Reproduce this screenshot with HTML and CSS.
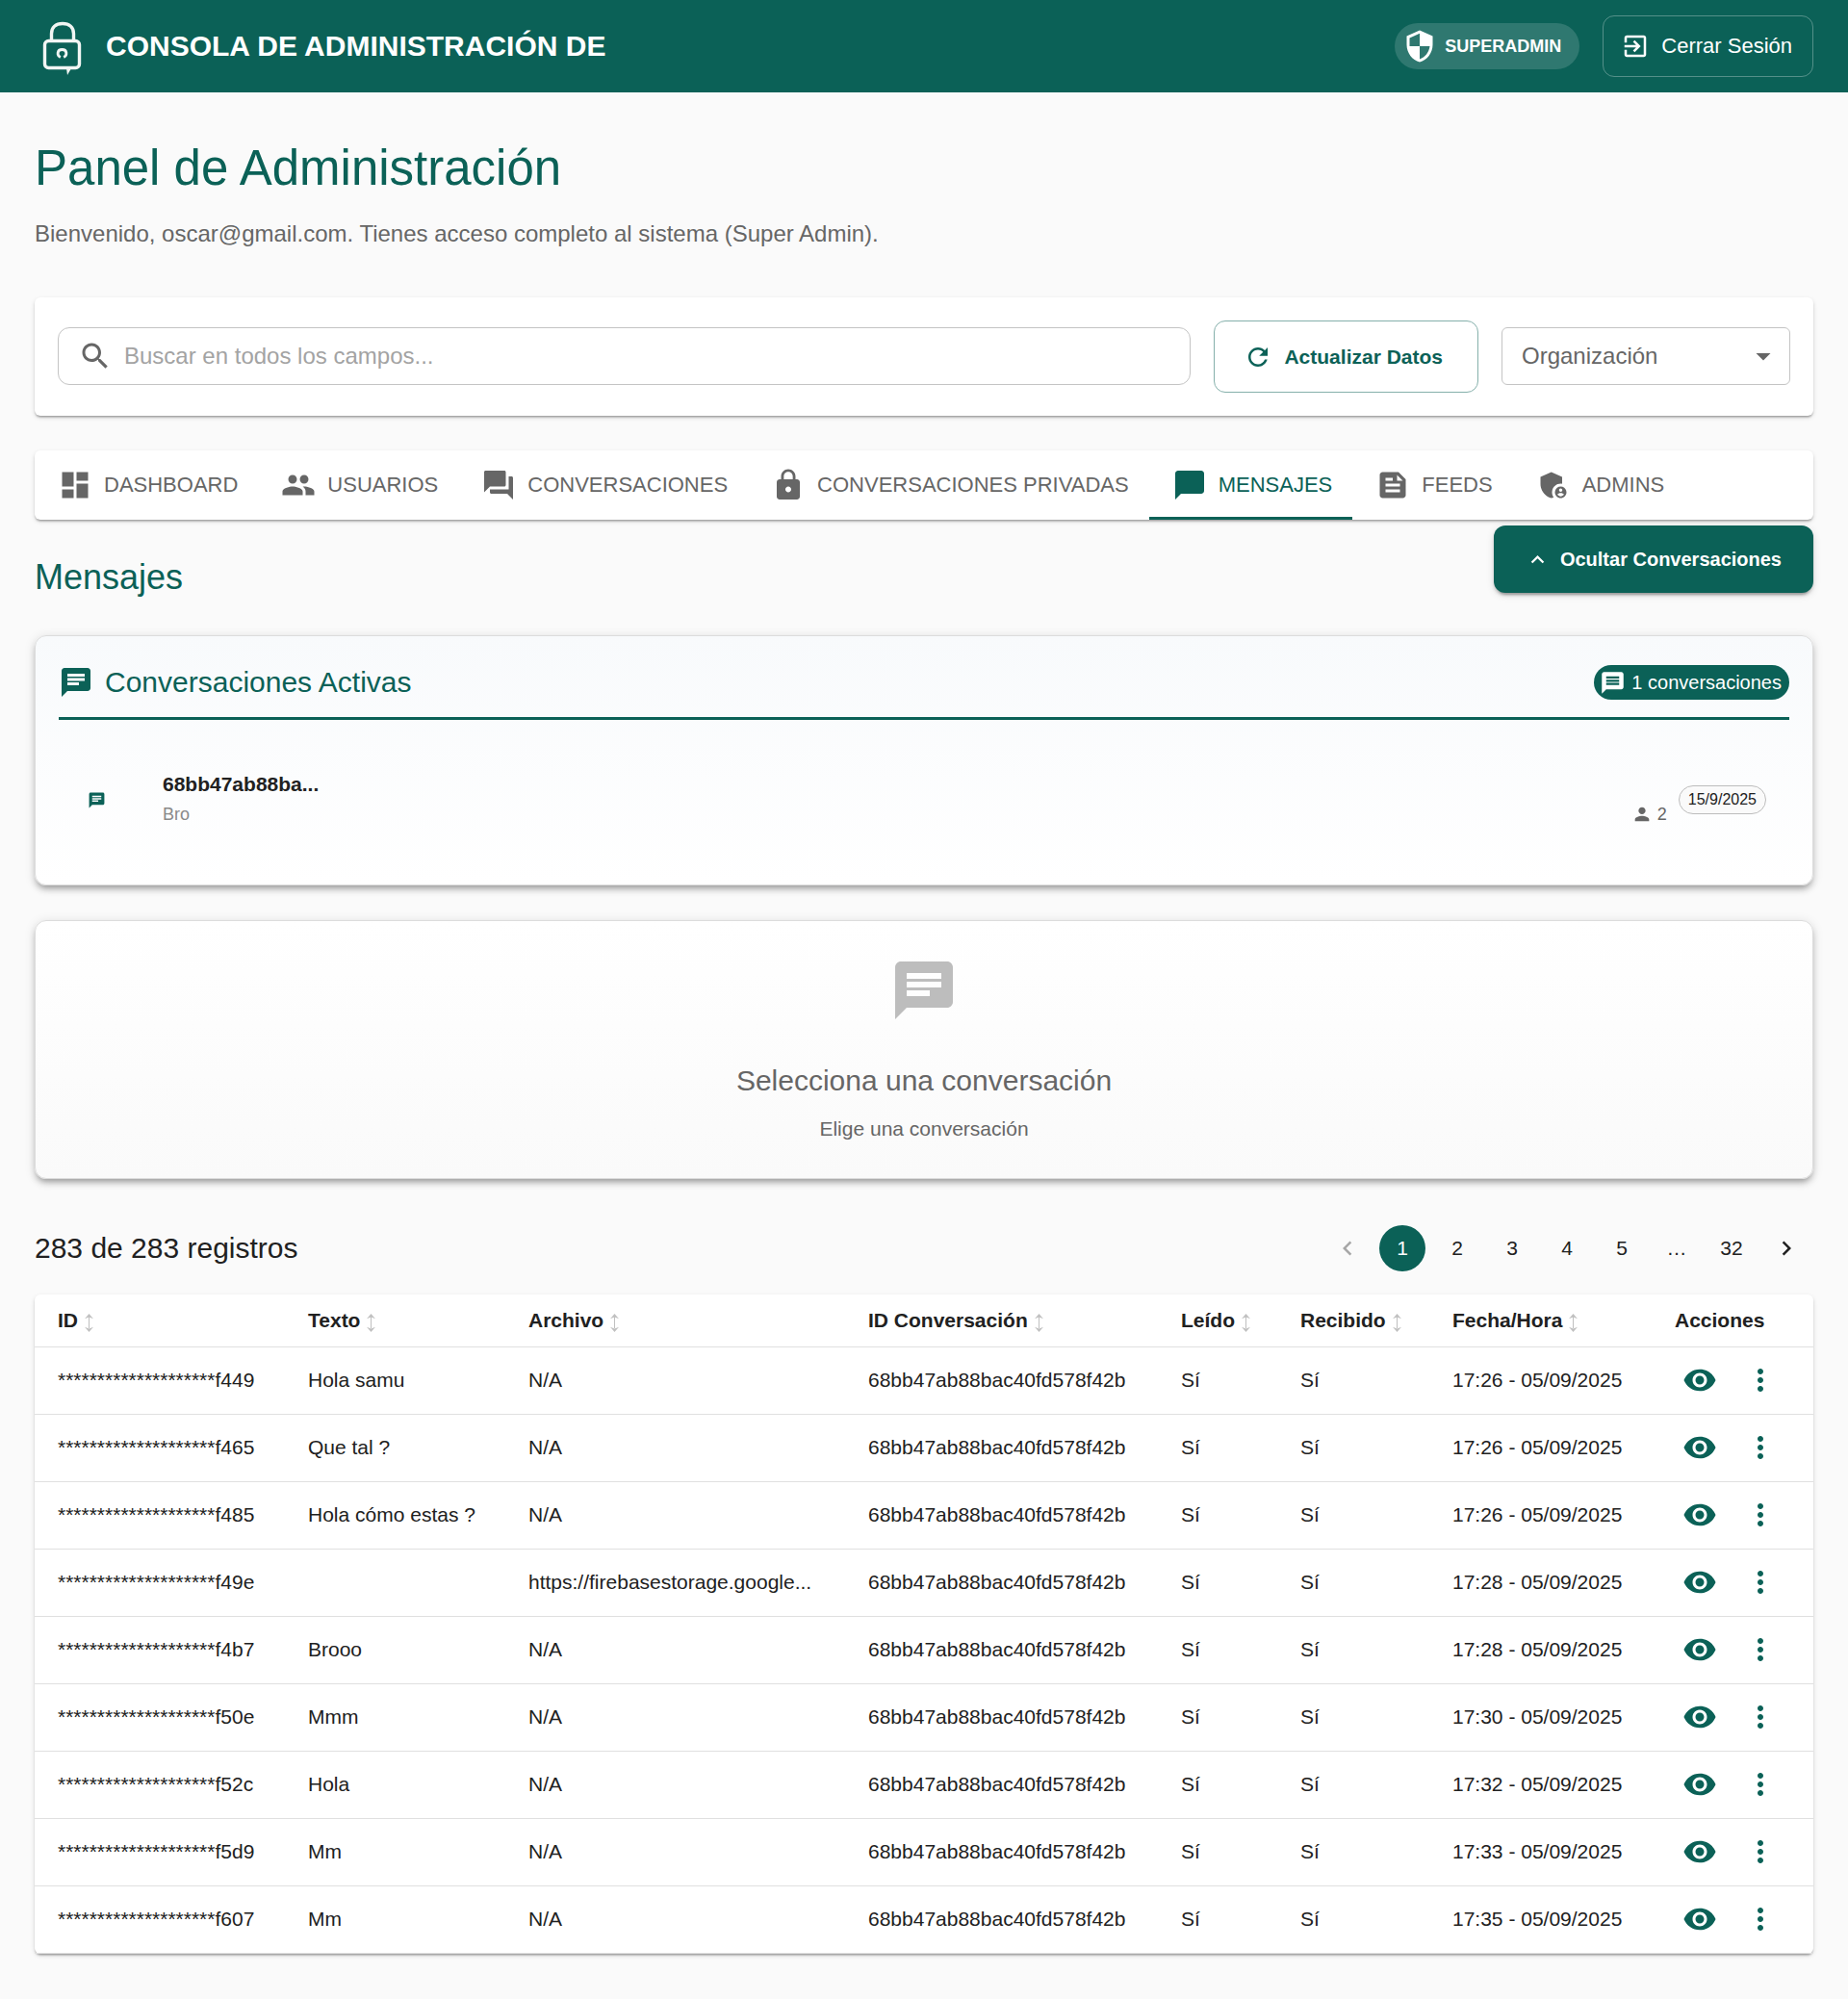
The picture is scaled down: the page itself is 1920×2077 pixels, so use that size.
FILE: index.html
```html
<!DOCTYPE html>
<html lang="es">
<head>
<meta charset="utf-8">
<meta name="viewport" content="width=device-width, initial-scale=1">
<title>Consola de Administración</title>
<link rel="stylesheet" href="styles.css">
</head>
<body>
<svg class="sprite" aria-hidden="true">
  <symbol id="i-security" viewBox="0 0 24 24"><path d="M12 1 3 5v6c0 5.55 3.84 10.74 9 12 5.16-1.26 9-6.45 9-12V5l-9-4zm0 10.99h7c-.53 4.12-3.28 7.79-7 8.94V12H5V6.3l7-3.11v8.8z"/></symbol>
  <symbol id="i-exit" viewBox="0 0 24 24"><path d="M10.09 15.59 11.5 17l5-5-5-5-1.41 1.41L12.67 11H3v2h9.67l-2.58 2.59zM19 3H5c-1.11 0-2 .9-2 2v4h2V5h14v14H5v-4H3v4c0 1.1.89 2 2 2h14c1.1 0 2-.9 2-2V5c0-1.1-.9-2-2-2z"/></symbol>
  <symbol id="i-search" viewBox="0 0 24 24"><path d="M15.5 14h-.79l-.28-.27C15.41 12.59 16 11.11 16 9.5 16 5.91 13.09 3 9.5 3S3 5.91 3 9.5 5.91 16 9.5 16c1.61 0 3.09-.59 4.23-1.57l.27.28v.79l5 4.99L20.49 19l-4.99-5zm-6 0C7.01 14 5 11.99 5 9.5S7.01 5 9.5 5 14 7.01 14 9.5 11.99 14 9.5 14z"/></symbol>
  <symbol id="i-refresh" viewBox="0 0 24 24"><path d="M17.65 6.35C16.2 4.9 14.21 4 12 4c-4.42 0-7.99 3.58-7.99 8s3.57 8 7.99 8c3.73 0 6.84-2.55 7.73-6h-2.08c-.82 2.33-3.04 4-5.65 4-3.31 0-6-2.69-6-6s2.69-6 6-6c1.66 0 3.14.69 4.22 1.78L13 11h7V4l-2.35 2.35z"/></symbol>
  <symbol id="i-drop" viewBox="0 0 24 24"><path d="m7 10 5 5 5-5z"/></symbol>
  <symbol id="i-dashboard" viewBox="0 0 24 24"><path d="M3 13h8V3H3v10zm0 8h8v-6H3v6zm10 0h8V11h-8v10zm0-18v6h8V3h-8z"/></symbol>
  <symbol id="i-people" viewBox="0 0 24 24"><path d="M16 11c1.66 0 2.99-1.34 2.99-3S17.66 5 16 5c-1.66 0-3 1.34-3 3s1.34 3 3 3zm-8 0c1.66 0 2.99-1.34 2.99-3S9.66 5 8 5C6.34 5 5 6.34 5 8s1.34 3 3 3zm0 2c-2.33 0-7 1.17-7 3.5V19h14v-2.5c0-2.33-4.67-3.5-7-3.5zm8 0c-.29 0-.62.02-.97.05 1.16.84 1.97 1.97 1.97 3.45V19h6v-2.5c0-2.33-4.67-3.5-7-3.5z"/></symbol>
  <symbol id="i-forum" viewBox="0 0 24 24"><path d="M21 6h-2v9H6v2c0 .55.45 1 1 1h11l4 4V7c0-.55-.45-1-1-1zm-4 6V3c0-.55-.45-1-1-1H3c-.55 0-1 .45-1 1v14l4-4h10c.55 0 1-.45 1-1z"/></symbol>
  <symbol id="i-lock" viewBox="0 0 24 24"><path d="M18 8h-1V6c0-2.76-2.24-5-5-5S7 3.24 7 6v2H6c-1.1 0-2 .9-2 2v10c0 1.1.9 2 2 2h12c1.1 0 2-.9 2-2V10c0-1.1-.9-2-2-2zm-6 9c-1.1 0-2-.9-2-2s.9-2 2-2 2 .9 2 2-.9 2-2 2zm3.1-9H8.9V6c0-1.71 1.39-3.1 3.1-3.1 1.71 0 3.1 1.39 3.1 3.1v2z"/></symbol>
  <symbol id="i-bubble" viewBox="0 0 24 24"><path d="M20 2H4c-1.1 0-2 .9-2 2v18l4-4h14c1.1 0 2-.9 2-2V4c0-1.1-.9-2-2-2z"/></symbol>
  <symbol id="i-feed" viewBox="0 0 24 24"><path d="M16 3H5c-1.1 0-2 .9-2 2v14c0 1.1.9 2 2 2h14c1.1 0 2-.9 2-2V8l-5-5zM7 7h5v2H7V7zm10 10H7v-2h10v2zm0-4H7v-2h10v2zm-2-4V5l4 4h-4z"/></symbol>
  <symbol id="i-admin" viewBox="0 0 24 24"><path d="M17 11c.34 0 .67.04 1 .09V6.27L10.5 3 3 6.27v4.91c0 4.54 3.2 8.79 7.5 9.82.55-.13 1.08-.32 1.6-.55-.69-.98-1.1-2.17-1.1-3.45 0-3.31 2.69-6 6-6z"/><path d="M17 13c-2.21 0-4 1.79-4 4s1.79 4 4 4 4-1.79 4-4-1.79-4-4-4zm0 1.38c.62 0 1.12.51 1.12 1.12s-.51 1.12-1.12 1.12-1.12-.51-1.12-1.12.5-1.12 1.12-1.12zm0 5.37c-.93 0-1.74-.46-2.24-1.17.05-.72 1.51-1.08 2.24-1.08s2.19.36 2.24 1.08c-.5.71-1.31 1.17-2.24 1.17z"/></symbol>
  <symbol id="i-up" viewBox="0 0 24 24"><path d="m12 8-6 6 1.41 1.41L12 10.83l4.59 4.58L18 14z"/></symbol>
  <symbol id="i-chat" viewBox="0 0 24 24"><path d="M20 2H4c-1.1 0-1.99.9-1.99 2L2 22l4-4h14c1.1 0 2-.9 2-2V4c0-1.1-.9-2-2-2zM6 9h12v2H6V9zm8 5H6v-2h8v2zm4-6H6V6h12v2z"/></symbol>
  <symbol id="i-message" viewBox="0 0 24 24"><path d="M20 2H4c-1.1 0-1.99.9-1.99 2L2 22l4-4h14c1.1 0 2-.9 2-2V4c0-1.1-.9-2-2-2zm-2 12H6v-2h12v2zm0-3H6V9h12v2zm0-3H6V6h12v2z"/></symbol>
  <symbol id="i-person" viewBox="0 0 24 24"><path d="M12 12c2.21 0 4-1.79 4-4s-1.79-4-4-4-4 1.79-4 4 1.79 4 4 4zm0 2c-2.67 0-8 1.34-8 4v2h16v-2c0-2.66-5.33-4-8-4z"/></symbol>
  <symbol id="i-prev" viewBox="0 0 24 24"><path d="M15.41 7.41 14 6l-6 6 6 6 1.41-1.41L10.83 12z"/></symbol>
  <symbol id="i-next" viewBox="0 0 24 24"><path d="M10 6 8.59 7.41 13.17 12l-4.58 4.59L10 18l6-6z"/></symbol>
  <symbol id="i-eye" viewBox="0 0 24 24"><path d="M12 4.5C7 4.5 2.73 7.61 1 12c1.73 4.39 6 7.5 11 7.5s9.27-3.11 11-7.5c-1.73-4.39-6-7.5-11-7.5zM12 17c-2.76 0-5-2.24-5-5s2.24-5 5-5 5 2.24 5 5-2.24 5-5 5zm0-8c-1.66 0-3 1.34-3 3s1.34 3 3 3 3-1.34 3-3-1.34-3-3-3z"/></symbol>
  <symbol id="i-more" viewBox="0 0 24 24"><path d="M12 8c1.1 0 2-.9 2-2s-.9-2-2-2-2 .9-2 2 .9 2 2 2zm0 2c-1.1 0-2 .9-2 2s.9 2 2 2 2-.9 2-2-.9-2-2-2zm0 6c-1.1 0-2 .9-2 2s.9 2 2 2 2-.9 2-2-.9-2-2-2z"/></symbol>
  <symbol id="i-sort" viewBox="0 0 9 19"><path d="M4 3h1v13H4zM4.500 0 9 5.200 4.500 3.600 0 5.200zM4.500 19 9 13.800 4.500 15.400 0 13.800z"/></symbol>
</svg>

<header class="topbar">
  <svg class="logo" viewBox="0 0 56 60" aria-hidden="true">
    <g fill="none" stroke="#f1f6f4">
      <path stroke-width="3.400" d="M17.500 24v-7C17.500 10.500 22 6.500 29 6.500S40.500 10.500 40.500 17v7"/>
      <rect stroke-width="3.400" x="10.500" y="24.500" width="36" height="28" rx="4"/>
      <path stroke-width="2.800" d="M26.800 41.500c-4-2-3.600-8 1.700-8s5.700 6 1.700 8"/>
    </g>
    <path fill="#f1f6f4" d="M33 53h5l-4 7z"/>
  </svg>
  <h1 class="brand">CONSOLA DE ADMINISTRACIÓN DE</h1>
  <span class="role"><svg class="icon"><use href="#i-security"/></svg>SUPERADMIN</span>
  <button type="button" class="logout"><svg class="icon icon-30"><use href="#i-exit"/></svg>Cerrar Sesión</button>
</header>

<main class="page">
  <h2 class="title">Panel de Administración</h2>
  <p class="welcome">Bienvenido, oscar@gmail.com. Tienes acceso completo al sistema (Super Admin).</p>

  <form class="paper filters">
    <label class="search">
      <svg class="icon" aria-hidden="true"><use href="#i-search"/></svg>
      <input type="text" placeholder="Buscar en todos los campos..." aria-label="Buscar en todos los campos">
    </label>
    <button type="button" class="refresh"><svg class="icon icon-30"><use href="#i-refresh"/></svg>Actualizar Datos</button>
    <div class="select">
      <select aria-label="Organización"><option>Organización</option></select>
      <svg class="icon" aria-hidden="true"><use href="#i-drop"/></svg>
    </div>
  </form>

  <nav class="paper tabs">
    <a class="tab" href="#"><svg class="icon"><use href="#i-dashboard"/></svg>DASHBOARD</a>
    <a class="tab" href="#"><svg class="icon"><use href="#i-people"/></svg>USUARIOS</a>
    <a class="tab" href="#"><svg class="icon"><use href="#i-forum"/></svg>CONVERSACIONES</a>
    <a class="tab" href="#"><svg class="icon"><use href="#i-lock"/></svg>CONVERSACIONES PRIVADAS</a>
    <a class="tab is-active" href="#" aria-current="page"><svg class="icon"><use href="#i-bubble"/></svg>MENSAJES</a>
    <a class="tab" href="#"><svg class="icon"><use href="#i-feed"/></svg>FEEDS</a>
    <a class="tab" href="#"><svg class="icon"><use href="#i-admin"/></svg>ADMINS</a>
  </nav>

  <div class="section-head">
    <h3 class="section-title">Mensajes</h3>
    <button type="button" class="toggle"><svg class="icon icon-27"><use href="#i-up"/></svg>Ocultar Conversaciones</button>
  </div>

  <section class="panel active-chats">
    <div class="panel-head">
      <svg class="icon"><use href="#i-chat"/></svg>
      <h4 class="heading">Conversaciones Activas</h4>
      <span class="count"><svg class="icon icon-27"><use href="#i-message"/></svg>1 conversaciones</span>
    </div>
    <div class="chat">
      <span class="chat-icon"><svg class="icon icon-19"><use href="#i-chat"/></svg></span>
      <div class="chat-text">
        <strong class="chat-name">68bb47ab88ba...</strong>
        <span class="chat-last">Bro</span>
      </div>
      <span class="members"><svg class="icon icon-22"><use href="#i-person"/></svg>2</span>
      <span class="date">15/9/2025</span>
    </div>
  </section>

  <section class="panel empty">
    <svg class="icon icon-72"><use href="#i-chat"/></svg>
    <h4 class="heading">Selecciona una conversación</h4>
    <p class="empty-hint">Elige una conversación</p>
  </section>

  <div class="list-head">
    <p class="heading">283 de 283 registros</p>
    <nav class="pager" aria-label="Paginación">
      <button type="button" disabled aria-label="Anterior"><svg class="icon icon-30"><use href="#i-prev"/></svg></button>
      <button type="button" class="is-current">1</button>
      <button type="button">2</button>
      <button type="button">3</button>
      <button type="button">4</button>
      <button type="button">5</button>
      <span>…</span>
      <button type="button">32</button>
      <button type="button" aria-label="Siguiente"><svg class="icon icon-30"><use href="#i-next"/></svg></button>
    </nav>
  </div>

  <div class="paper">
    <table class="grid">
      <colgroup><col class="c-id"><col class="c-text"><col class="c-file"><col class="c-conv"><col class="c-read"><col class="c-recv"><col class="c-date"><col class="c-act"></colgroup>
      <thead>
        <tr>
          <th><button type="button">ID<svg class="sort"><use href="#i-sort"/></svg></button></th>
          <th><button type="button">Texto<svg class="sort"><use href="#i-sort"/></svg></button></th>
          <th><button type="button">Archivo<svg class="sort"><use href="#i-sort"/></svg></button></th>
          <th><button type="button">ID Conversación<svg class="sort"><use href="#i-sort"/></svg></button></th>
          <th><button type="button">Leído<svg class="sort"><use href="#i-sort"/></svg></button></th>
          <th><button type="button">Recibido<svg class="sort"><use href="#i-sort"/></svg></button></th>
          <th><button type="button">Fecha/Hora<svg class="sort"><use href="#i-sort"/></svg></button></th>
          <th>Acciones</th>
        </tr>
      </thead>
      <tbody>
        <tr><td>********************f449</td><td>Hola samu</td><td>N/A</td><td>68bb47ab88bac40fd578f42b</td><td>Sí</td><td>Sí</td><td>17:26 - 05/09/2025</td><td><div class="actions"><button type="button" aria-label="Ver"><svg class="icon"><use href="#i-eye"/></svg></button><button type="button" aria-label="Más"><svg class="icon"><use href="#i-more"/></svg></button></div></td></tr>
        <tr><td>********************f465</td><td>Que tal ?</td><td>N/A</td><td>68bb47ab88bac40fd578f42b</td><td>Sí</td><td>Sí</td><td>17:26 - 05/09/2025</td><td><div class="actions"><button type="button" aria-label="Ver"><svg class="icon"><use href="#i-eye"/></svg></button><button type="button" aria-label="Más"><svg class="icon"><use href="#i-more"/></svg></button></div></td></tr>
        <tr><td>********************f485</td><td>Hola cómo estas ?</td><td>N/A</td><td>68bb47ab88bac40fd578f42b</td><td>Sí</td><td>Sí</td><td>17:26 - 05/09/2025</td><td><div class="actions"><button type="button" aria-label="Ver"><svg class="icon"><use href="#i-eye"/></svg></button><button type="button" aria-label="Más"><svg class="icon"><use href="#i-more"/></svg></button></div></td></tr>
        <tr><td>********************f49e</td><td></td><td>https://firebasestorage.google...</td><td>68bb47ab88bac40fd578f42b</td><td>Sí</td><td>Sí</td><td>17:28 - 05/09/2025</td><td><div class="actions"><button type="button" aria-label="Ver"><svg class="icon"><use href="#i-eye"/></svg></button><button type="button" aria-label="Más"><svg class="icon"><use href="#i-more"/></svg></button></div></td></tr>
        <tr><td>********************f4b7</td><td>Brooo</td><td>N/A</td><td>68bb47ab88bac40fd578f42b</td><td>Sí</td><td>Sí</td><td>17:28 - 05/09/2025</td><td><div class="actions"><button type="button" aria-label="Ver"><svg class="icon"><use href="#i-eye"/></svg></button><button type="button" aria-label="Más"><svg class="icon"><use href="#i-more"/></svg></button></div></td></tr>
        <tr><td>********************f50e</td><td>Mmm</td><td>N/A</td><td>68bb47ab88bac40fd578f42b</td><td>Sí</td><td>Sí</td><td>17:30 - 05/09/2025</td><td><div class="actions"><button type="button" aria-label="Ver"><svg class="icon"><use href="#i-eye"/></svg></button><button type="button" aria-label="Más"><svg class="icon"><use href="#i-more"/></svg></button></div></td></tr>
        <tr><td>********************f52c</td><td>Hola</td><td>N/A</td><td>68bb47ab88bac40fd578f42b</td><td>Sí</td><td>Sí</td><td>17:32 - 05/09/2025</td><td><div class="actions"><button type="button" aria-label="Ver"><svg class="icon"><use href="#i-eye"/></svg></button><button type="button" aria-label="Más"><svg class="icon"><use href="#i-more"/></svg></button></div></td></tr>
        <tr><td>********************f5d9</td><td>Mm</td><td>N/A</td><td>68bb47ab88bac40fd578f42b</td><td>Sí</td><td>Sí</td><td>17:33 - 05/09/2025</td><td><div class="actions"><button type="button" aria-label="Ver"><svg class="icon"><use href="#i-eye"/></svg></button><button type="button" aria-label="Más"><svg class="icon"><use href="#i-more"/></svg></button></div></td></tr>
        <tr><td>********************f607</td><td>Mm</td><td>N/A</td><td>68bb47ab88bac40fd578f42b</td><td>Sí</td><td>Sí</td><td>17:35 - 05/09/2025</td><td><div class="actions"><button type="button" aria-label="Ver"><svg class="icon"><use href="#i-eye"/></svg></button><button type="button" aria-label="Más"><svg class="icon"><use href="#i-more"/></svg></button></div></td></tr>
      </tbody>
    </table>
  </div>
</main>
</body>
</html>
```
FILE: styles.css
```css
:root {
  --primary: #0b6157;
  --text: #212121;
  --muted: #666;
  --line: #e0e0e0;
}

*, *::before, *::after { box-sizing: border-box; }

body {
  margin: 0;
  background: #fafafa;
  color: var(--text);
  font-family: "Liberation Sans", Arial, Helvetica, sans-serif;
  font-size: 21px;
  line-height: 30px;
}

h1, h2, h3, h4, p { margin: 0; font-weight: 400; }

button, input, select { font: inherit; color: inherit; }
button { padding: 0; border: 0; background: none; cursor: pointer; white-space: nowrap; }

.sprite { display: none; }
.icon { width: 36px; height: 36px; flex: none; display: block; fill: currentColor; }
.icon-19 { width: 19px; height: 19px; }
.icon-22 { width: 22px; height: 22px; }
.icon-27 { width: 27px; height: 27px; }
.icon-30 { width: 30px; height: 30px; }
.icon-72 { width: 72px; height: 72px; }

/* Top bar */
.topbar {
  display: flex;
  align-items: center;
  gap: 24px;
  height: 96px;
  padding: 0 36px;
  background: var(--primary);
  color: #fff;
}
.logo { width: 56px; height: 60px; flex: none; }
.brand {
  flex: 1;
  margin-left: -6px;
  font-size: 30px;
  line-height: 46px;
  font-weight: 700;
}
.role {
  display: flex;
  align-items: center;
  gap: 8px;
  height: 48px;
  padding: 0 19px 0 8px;
  border-radius: 24px;
  background: rgba(255, 255, 255, .15);
  font-size: 18px;
  font-weight: 700;
}
.logout {
  display: flex;
  align-items: center;
  gap: 12px;
  height: 64px;
  padding: 0 21px 0 18px;
  border: 1px solid rgba(255, 255, 255, .3);
  border-radius: 12px;
  font-size: 22px;
}

/* Page */
.page { padding: 48px 36px 36px; }
.title { font-size: 51px; line-height: 62px; color: var(--primary); }
.welcome { margin-top: 19px; font-size: 24px; line-height: 36px; color: var(--muted); }

.paper {
  border-radius: 6px;
  background: #fff;
  box-shadow: 0 3px 2px -2px rgba(0, 0, 0, .2), 0 2px 2px rgba(0, 0, 0, .14), 0 2px 5px rgba(0, 0, 0, .12);
}

.filters { display: flex; align-items: center; gap: 24px; margin-top: 48px; padding: 24px; }
.search {
  flex: 1;
  display: flex;
  align-items: center;
  gap: 12px;
  height: 60px;
  padding: 0 20px;
  border: 1px solid #c4c4c4;
  border-radius: 12px;
  color: var(--muted);
}
.search input {
  flex: 1;
  min-width: 0;
  height: 100%;
  padding: 0;
  border: 0;
  outline: 0;
  background: none;
  font-size: 24px;
}
.search input::placeholder { color: #a3a3a3; opacity: 1; }
.refresh {
  display: flex;
  align-items: center;
  gap: 12px;
  height: 75px;
  padding: 0 36px 0 30px;
  border: 1px solid #85b0ab;
  border-radius: 12px;
  color: var(--primary);
  font-weight: 700;
}
.select { position: relative; width: 300px; color: var(--muted); }
.select select {
  display: block;
  width: 100%;
  height: 60px;
  padding: 0 48px 0 20px;
  border: 1px solid #c4c4c4;
  border-radius: 6px;
  background: #fff;
  font-size: 24px;
  appearance: none;
}
.select .icon { position: absolute; top: 12px; right: 10px; pointer-events: none; }
.search, .select { margin-bottom: 1px; }

.tabs { display: flex; margin-top: 36px; overflow: hidden; }
.tab {
  display: flex;
  align-items: center;
  gap: 12px;
  height: 72px;
  padding: 0 21px 0 24px;
  color: var(--muted);
  font-size: 22px;
  white-space: nowrap;
  text-decoration: none;
}
.tab.is-active { color: var(--primary); box-shadow: inset 0 -3px var(--primary); }

.section-head { display: flex; justify-content: space-between; align-items: flex-start; margin-top: 6px; }
.section-title { padding-top: 30px; font-size: 36px; line-height: 48px; color: var(--primary); }
.toggle {
  display: flex;
  align-items: center;
  gap: 10px;
  height: 70px;
  padding: 0 33px 0 32px;
  border-radius: 12px;
  background: var(--primary);
  color: #fff;
  font-size: 20px;
  font-weight: 700;
  box-shadow: 0 5px 2px -3px rgba(0, 0, 0, .2), 0 3px 3px rgba(0, 0, 0, .14), 0 2px 8px rgba(0, 0, 0, .12);
}

/* Conversation panels */
.panel {
  margin-top: 36px;
  border: 1px solid #dcdcdc;
  border-radius: 12px;
  box-shadow: 0 5px 5px -3px rgba(0, 0, 0, .2), 0 5px 6px rgba(0, 0, 0, .14), 0 2px 12px rgba(0, 0, 0, .12);
}
.heading { font-size: 30px; line-height: 48px; }
.active-chats { padding: 24px; background: linear-gradient(#f8fafc, #fff); }
.panel-head {
  display: flex;
  align-items: center;
  gap: 12px;
  padding-bottom: 12px;
  border-bottom: 3px solid var(--primary);
  color: var(--primary);
}
.panel-head .heading { flex: 1; }
.count {
  display: flex;
  align-items: center;
  gap: 6px;
  height: 36px;
  padding: 0 8px 0 6px;
  border-radius: 18px;
  background: var(--primary);
  color: #fff;
  font-size: 20px;
}
.chat { display: flex; align-items: center; margin-top: 24px; padding: 28px 24px 33px; }
.chat-icon { display: flex; justify-content: center; width: 30px; margin-right: 54px; color: var(--primary); }
.chat-text { display: flex; flex-direction: column; flex: 1; }
.chat-last { font-size: 18px; line-height: 32px; color: #8a8a8a; }
.members {
  display: flex;
  align-items: center;
  align-self: flex-end;
  gap: 5px;
  margin-right: 12px;
  font-size: 18px;
  line-height: 32px;
  color: var(--muted);
}
.date {
  height: 30px;
  padding: 0 9px;
  border: 1px solid #bdbdbd;
  border-radius: 15px;
  background: #fafafa;
  font-size: 16px;
  line-height: 28px;
}

.empty {
  display: flex;
  flex-direction: column;
  align-items: center;
  padding: 36px;
  background: linear-gradient(#fff, #fafafa);
  color: var(--muted);
}
.empty .icon { margin-bottom: 34px; color: #bdbdbd; }
.empty-hint { margin-top: 11px; }

/* Records */
.list-head { display: flex; justify-content: space-between; align-items: center; margin: 48px 0 24px; }
.pager { display: flex; gap: 9px; padding-right: 4px; }
.pager > * {
  display: flex;
  align-items: center;
  justify-content: center;
  width: 48px;
  height: 48px;
  border-radius: 24px;
}
.pager .is-current { background: var(--primary); color: #fff; }
.pager button:disabled { opacity: .38; }

.grid { width: 100%; table-layout: fixed; border-collapse: separate; border-spacing: 0; }
.c-id { width: 260px; }
.c-text { width: 229px; }
.c-file { width: 353px; }
.c-conv { width: 325px; }
.c-read { width: 124px; }
.c-recv { width: 158px; }
.c-date { width: 231px; }
.c-act { width: 168px; }
.grid th, .grid td {
  padding: 0 0 0 24px;
  border-bottom: 1px solid var(--line);
  text-align: left;
  white-space: nowrap;
}
.grid th { height: 55px; font-weight: 700; }
.grid td { height: 70px; padding-bottom: 1px; }
.grid th button { display: flex; align-items: center; gap: 7px; }
.sort { width: 9px; height: 19px; margin-top: 4px; fill: #c0c0c0; }
.actions { display: flex; gap: 12px; color: var(--primary); }
.actions button { display: grid; place-items: center; width: 51px; height: 51px; }
```
